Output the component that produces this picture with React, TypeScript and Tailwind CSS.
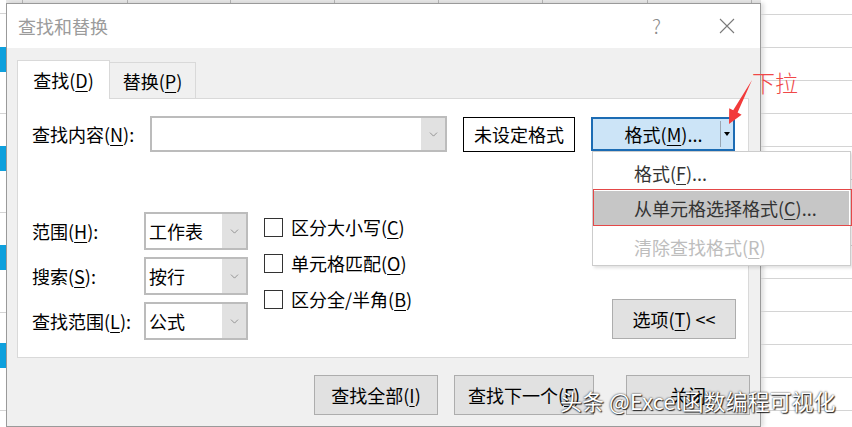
import { ChevronDown } from 'lucide-react'

function Key({ children }: { children: string }) {
  return <span className="underline decoration-1 underline-offset-[3px]">{children}</span>
}

function Combo({ value }: { value: string }) {
  return (
    <div className="flex h-[38px] w-[104px] border-2 border-[#bcbcbc] bg-white">
      <div className="flex flex-1 items-center pl-[3px] text-[18px] leading-none">{value}</div>
      <div className="flex w-[24px] items-center justify-center bg-[#e1e1e1]">
        <ChevronDown size={13} strokeWidth={1.2} className="text-[#6b6b6b]" />
      </div>
    </div>
  )
}

function Check({ children }: { children: React.ReactNode }) {
  return (
    <div className="flex h-[36px] items-center gap-[8px]">
      <div className="h-[19px] w-[19px] border border-[#333] bg-white" />
      <span className="text-[18px] leading-none">{children}</span>
    </div>
  )
}

function Button({ className, children }: { className: string; children: React.ReactNode }) {
  return (
    <div
      className={`flex h-[40px] items-center justify-center border border-[#adadad] bg-[#e1e1e1] text-[18px] leading-none ${className}`}
    >
      {children}
    </div>
  )
}

function Dialog() {
  return (
    <div className="flex-1 border border-[#9a9a9a] bg-[#f0f0f0] shadow-[3px_0_4px_rgba(0,0,0,0.12)]">
      {/* title bar */}
      <div className="flex h-[44px] items-center bg-white pl-[11px] pr-[25px]">
        <span className="text-[18px] leading-none text-[#9b9b9b]">查找和替换</span>
        <span className="ml-auto mr-[58px] text-[20px] font-light leading-none text-[#8a8a8a]">?</span>
        <svg width="16" height="16" viewBox="0 0 16 16" className="text-[#7a7a7a]">
          <path d="M1 1 L15 15 M15 1 L1 15" stroke="currentColor" strokeWidth="1.1" />
        </svg>
      </div>

      <div className="pt-[12px]">
        {/* tabs */}
        <div className="ml-[10px] flex h-[38px] items-end">
          <div className="relative z-10 -mb-px flex h-[39px] w-[93px] items-center justify-center border-x border-t border-[#d9d9d9] bg-white text-[18px] leading-none">
            查找(<Key>D</Key>)
          </div>
          <div className="flex h-[36px] w-[86px] items-center justify-center border-r border-t border-[#d9d9d9] text-[18px] leading-none">
            替换(<Key>P</Key>)
          </div>
        </div>

        {/* panel */}
        <div className="ml-[10px] h-[260px] w-[732px] border border-[#d9d9d9] bg-white">
          <div className="mt-[17px] flex items-center pl-[14px]">
            <div className="w-[118px] text-[18px] leading-none">
              查找内容(<Key>N</Key>):
            </div>
            <div className="flex h-[36px] w-[297px] border-2 border-[#bcbcbc]">
              <div className="flex-1" />
              <div className="flex w-[24px] items-center justify-center bg-[#e1e1e1]">
                <ChevronDown size={13} strokeWidth={1.2} className="text-[#6b6b6b]" />
              </div>
            </div>
            <div className="ml-[16px] flex h-[35px] w-[112px] items-center justify-center border border-black text-[18px] leading-none">
              未设定格式
            </div>
            <div className="ml-[16px] flex h-[34px] w-[144px] items-center border-2 border-[#1c6cb4] bg-[#cce4f7]">
              <div className="flex flex-1 items-center justify-center pl-[14px] text-[18px] leading-none">
                格式(<Key>M</Key>)...
              </div>
              <div className="h-[26px] w-px bg-[#9aa6b2]" />
              <div className="flex w-[12px] items-center justify-center">
                <div className="h-0 w-0 border-x-[3px] border-t-[4px] border-x-transparent border-t-black" />
              </div>
            </div>
          </div>

          <div className="mt-[60px] flex pl-[14px]">
            <div className="flex flex-col gap-[7px]">
              <div className="flex items-center">
                <div className="w-[112px] text-[18px] leading-none">
                  范围(<Key>H</Key>):
                </div>
                <Combo value="工作表" />
              </div>
              <div className="flex items-center">
                <div className="w-[112px] text-[18px] leading-none">
                  搜索(<Key>S</Key>):
                </div>
                <Combo value="按行" />
              </div>
              <div className="flex items-center">
                <div className="w-[112px] text-[18px] leading-none">
                  查找范围(<Key>L</Key>):
                </div>
                <Combo value="公式" />
              </div>
            </div>
            <div className="-mt-[3px] ml-[16px] flex flex-col">
              <Check>
                区分大小写(<Key>C</Key>)
              </Check>
              <Check>
                单元格匹配(<Key>O</Key>)
              </Check>
              <Check>
                区分全/半角(<Key>B</Key>)
              </Check>
            </div>
            <div className="ml-auto mr-[12px] flex items-end pb-[1px]">
              <Button className="w-[124px]">
                选项(<Key>T</Key>)&nbsp;&lt;&lt;
              </Button>
            </div>
          </div>
        </div>

        {/* bottom buttons */}
        <div className="mt-[17px] flex justify-end pr-[10px]">
          <Button className="w-[124px]">
            查找全部(<Key>I</Key>)
          </Button>
          <Button className="ml-[16px] w-[140px]">
            查找下一个(<Key>F</Key>)
          </Button>
          <Button className="ml-[32px] w-[124px]">关闭</Button>
        </div>
      </div>
    </div>
  )
}

export default function App() {
  return (
    <div className="relative flex h-[427px] w-[852px] overflow-hidden bg-white font-['Noto_Sans_CJK_SC',sans-serif] text-black">
      {/* sheet, left edge */}
      <div className="flex w-[6px] flex-col">
        <div className="h-[14px] border-b border-[#d4d4d4]" />
        <div className="h-[33px]" />
        <div className="h-[25px] bg-[#0ea0dd]" />
        <div className="h-[42px] border-b border-[#d4d4d4]" />
        <div className="h-[32px]" />
        <div className="h-[25px] bg-[#0ea0dd]" />
        <div className="h-[42px] border-b border-[#d4d4d4]" />
        <div className="h-[32px]" />
        <div className="h-[25px] bg-[#0ea0dd]" />
        <div className="h-[43px] border-b border-[#d4d4d4]" />
        <div className="h-[30px]" />
        <div className="h-[25px] bg-[#0ea0dd]" />
        <div className="h-[43px] border-b border-[#d4d4d4]" />
      </div>

      <div className="flex w-[755px] flex-col">
        {/* sheet, column header strip */}
        <div className="flex h-[3px] bg-[#e6e6e6]">
          <div className="w-[16px]" />
          <div className="w-[105px] border-l border-[#b5b5b5]" />
          <div className="w-[103px] border-l border-[#b5b5b5]" />
          <div className="w-[104px] border-l border-[#b5b5b5]" />
          <div className="w-[104px] border-l border-[#b5b5b5]" />
          <div className="w-[104px] border-l border-[#b5b5b5]" />
          <div className="w-[105px] border-l border-[#b5b5b5]" />
          <div className="w-[104px] border-l border-[#b5b5b5]" />
          <div className="flex-1 border-l border-[#b5b5b5]" />
        </div>
        <Dialog />
      </div>

      {/* sheet, right side rows */}
      <div className="flex flex-1 flex-col">
        <div className="h-[15px] shrink-0 border-b border-[#d4d4d4]" />
        {Array.from({ length: 13 }).map((_, i) => (
          <div key={i} className="h-[33px] shrink-0 border-b border-[#d4d4d4]" />
        ))}
      </div>

      {/* format dropdown menu */}
      <div className="absolute left-[592px] top-[151px] flex h-[115px] w-[259px] flex-col border border-[#cccccc] bg-white pt-[2px] text-[18px] leading-none text-[#333] shadow-[2px_2px_3px_rgba(0,0,0,0.12)]">
        <div className="flex h-[37px] items-center pl-[41px]">
          格式(<Key>F</Key>)...
        </div>
        <div className="mx-[1px] flex h-[34px] items-center bg-[#c6c6c6] pl-[40px]">
          从单元格选择格式(<Key>C</Key>)...
        </div>
        <div className="flex h-[40px] items-center pl-[41px] pt-[3px] text-[#bdbdbd]">
          清除查找格式(<Key>R</Key>)
        </div>
      </div>
      <div className="absolute left-[593px] top-[189px] h-[37px] w-[259px] border border-[#e44848]" />

      {/* annotation */}
      <svg className="absolute left-[720px] top-[75px]" width="40" height="55" viewBox="720 75 40 55">
        <polygon
          points="752,80 737.6,112.6 741.6,114.7 729,124 729.2,108.3 733.2,110.3"
          fill="#f23a3a"
        />
      </svg>
      <div className="absolute left-[752px] top-[71px] text-[23px] font-light leading-none text-[#f04848]">下拉</div>

      {/* watermark */}
      <div className="absolute left-[560px] top-[389px] whitespace-nowrap text-[22px] leading-none text-white [text-shadow:0_0_2px_rgba(0,0,0,0.9),1px_1px_1px_rgba(0,0,0,0.8)]">
        头条 @Excel函数编程可视化
      </div>
    </div>
  )
}
